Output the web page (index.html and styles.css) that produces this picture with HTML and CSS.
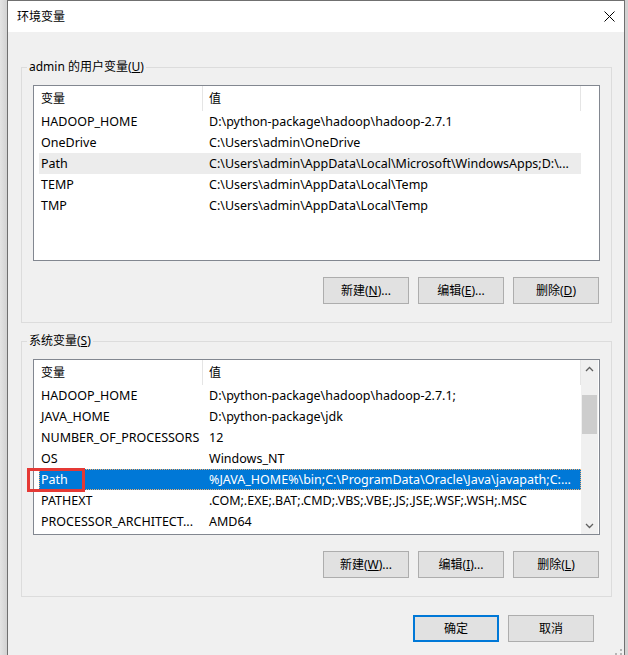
FILE: index.html
```html
<!DOCTYPE html>
<html lang="zh-CN">
<head>
<meta charset="utf-8">
<title>环境变量</title>
<link rel="stylesheet" href="styles.css">
</head>
<body>
<div class="window">
  <div class="titlebar">
    <span class="title">环境变量</span>
    <svg class="close" width="11" height="11" viewBox="0 0 11 11"><path d="M0.5 0.5 L10.5 10.5 M10.5 0.5 L0.5 10.5" stroke="#000" stroke-width="1" fill="none"/></svg>
  </div>
  <div class="content">
    <fieldset class="group">
      <legend>admin 的用户变量(<u>U</u>)</legend>
      <div class="group-inner">
        <div class="list">
          <div class="list-main">
            <div class="lhead"><div class="hc hc1">变量</div><div class="hc hc2">值</div></div>
            <div class="row"><div class="c1">HADOOP_HOME</div><div class="c2">D:\python-package\hadoop\hadoop-2.7.1</div></div>
            <div class="row"><div class="c1">OneDrive</div><div class="c2">C:\Users\admin\OneDrive</div></div>
            <div class="row hover"><div class="c1">Path</div><div class="c2">C:\Users\admin\AppData\Local\Microsoft\WindowsApps;D:\...</div></div>
            <div class="row"><div class="c1">TEMP</div><div class="c2">C:\Users\admin\AppData\Local\Temp</div></div>
            <div class="row"><div class="c1">TMP</div><div class="c2">C:\Users\admin\AppData\Local\Temp</div></div>
          </div>
        </div>
        <div class="btns">
          <div class="btn">新建(<u>N</u>)...</div>
          <div class="btn">编辑(<u>E</u>)...</div>
          <div class="btn">删除(<u>D</u>)</div>
        </div>
      </div>
    </fieldset>
    <fieldset class="group">
      <legend>系统变量(<u>S</u>)</legend>
      <div class="group-inner">
        <div class="list">
          <div class="list-main">
            <div class="lhead"><div class="hc hc1">变量</div><div class="hc hc2">值</div></div>
            <div class="row"><div class="c1">HADOOP_HOME</div><div class="c2">D:\python-package\hadoop\hadoop-2.7.1;</div></div>
            <div class="row"><div class="c1">JAVA_HOME</div><div class="c2">D:\python-package\jdk</div></div>
            <div class="row"><div class="c1">NUMBER_OF_PROCESSORS</div><div class="c2">12</div></div>
            <div class="row"><div class="c1">OS</div><div class="c2">Windows_NT</div></div>
            <div class="row selected"><div class="c1">Path</div><div class="c2">%JAVA_HOME%\bin;C:\ProgramData\Oracle\Java\javapath;C:...</div><span class="mark"></span></div>
            <div class="row"><div class="c1">PATHEXT</div><div class="c2">.COM;.EXE;.BAT;.CMD;.VBS;.VBE;.JS;.JSE;.WSF;.WSH;.MSC</div></div>
            <div class="row"><div class="c1">PROCESSOR_ARCHITECT...</div><div class="c2">AMD64</div></div>
          </div>
          <div class="scrollbar">
            <div class="sb-btn"><svg width="9" height="6" viewBox="0 0 9 6"><path d="M1 5 L4.5 1.5 L8 5" stroke="#606060" stroke-width="1.3" fill="none"/></svg></div>
            <div class="thumb"></div>
            <div class="sb-space"></div>
            <div class="sb-btn"><svg width="9" height="6" viewBox="0 0 9 6"><path d="M1 1 L4.5 4.5 L8 1" stroke="#606060" stroke-width="1.3" fill="none"/></svg></div>
          </div>
        </div>
        <div class="btns">
          <div class="btn">新建(<u>W</u>)...</div>
          <div class="btn">编辑(<u>I</u>)...</div>
          <div class="btn">删除(<u>L</u>)</div>
        </div>
      </div>
    </fieldset>
    <div class="dlg-btns">
      <div class="btn default">确定</div>
      <div class="btn">取消</div>
    </div>
  </div>
  <svg class="grip" width="10" height="10" viewBox="0 0 10 10"><rect x="7" y="3" width="2" height="2" fill="#b5b5b5"/><rect x="2" y="7" width="2" height="2" fill="#b5b5b5"/><rect x="7" y="7" width="2" height="2" fill="#b5b5b5"/></svg>
</div>
</body>
</html>
```

FILE: styles.css
```css
html, body {
  margin: 0;
  height: 655px;
  overflow: hidden;
}
body {
  background: linear-gradient(to right, #e4e4e4, #d2d2d2 7px);
  font-family: "Noto Sans", "Noto Sans CJK SC", sans-serif;
  font-size: 12px;
  color: #000;
}
.window {
  position: relative;
  margin-left: 7px;
  width: 616px;
  height: 680px;
  border: 1px solid #707070;
  border-bottom: none;
  background: #f0f0f0;
}
.titlebar {
  height: 31px;
  background: #fff;
  display: flex;
  align-items: center;
  justify-content: space-between;
  padding: 0 9px;
}
.title {
  font-size: 12px;
  line-height: 16px;
}
.close {
  display: block;
}
.content {
  padding: 27px 12px 0 13px;
}
.group {
  margin: 0;
  padding: 0;
  border: 1px solid #dcdcdc;
  min-width: 0;
}
.group + .group {
  margin-top: 10px;
}
.group legend {
  margin-left: 5px;
  padding: 0 2px;
  line-height: 16px;
  font-size: 12px;
}
.group-inner {
  padding: 10px 11px 18px 11px;
}
.list {
  border: 1px solid #828790;
  background: #fff;
  height: 174px;
  display: flex;
  position: relative;
}
.list-main {
  width: 547px;
}
.lhead {
  display: flex;
  height: 25px;
}
.hc {
  box-sizing: border-box;
  line-height: 25px;
  border-right: 1px solid #e5e5e5;
}
.hc1 {
  width: 169px;
  padding-left: 7px;
}
.hc2 {
  width: 378px;
  padding-left: 6px;
}
.row {
  position: relative;
  display: flex;
  margin-left: 5px;
  width: 542px;
  height: 21px;
  line-height: 21px;
  font-size: 12.5px;
  color: #000;
}
.row .c1 {
  box-sizing: border-box;
  width: 163px;
  padding-left: 2px;
  white-space: nowrap;
  overflow: hidden;
}
.row .c2 {
  box-sizing: border-box;
  width: 379px;
  padding-left: 7px;
  white-space: nowrap;
  overflow: hidden;
}
.row.hover {
  background: #ececec;
}
.row.selected {
  background: #0078d7;
  color: #fff;
  outline: 1px dotted #f0b070;
  outline-offset: -1px;
}
.mark {
  position: absolute;
  left: -12px;
  top: -1px;
  width: 58px;
  height: 24px;
  box-sizing: border-box;
  border: 3px solid #e53935;
}
.scrollbar {
  width: 17px;
  background: #f0f0f0;
  display: flex;
  flex-direction: column;
}
.sb-btn {
  height: 17px;
  display: flex;
  align-items: center;
  justify-content: center;
}
.thumb {
  margin: 18px 1px 0 1px;
  height: 39px;
  background: #cdcdcd;
}
.sb-space {
  flex: 1;
}
.btns {
  display: flex;
  justify-content: flex-end;
  gap: 9px;
  margin-top: 16px;
  padding-right: 1px;
}
.btn {
  box-sizing: border-box;
  width: 86px;
  height: 27px;
  border: 1px solid #adadad;
  background: #e1e1e1;
  display: flex;
  align-items: center;
  justify-content: center;
  font-size: 12px;
  line-height: 16px;
}
.btn.default {
  border: 2px solid #0078d7;
}
.dlg-btns {
  display: flex;
  justify-content: flex-end;
  gap: 9px;
  margin-top: 18px;
  padding-right: 18px;
}
.grip {
  position: absolute;
  left: 605px;
  top: 645px;
}
```
